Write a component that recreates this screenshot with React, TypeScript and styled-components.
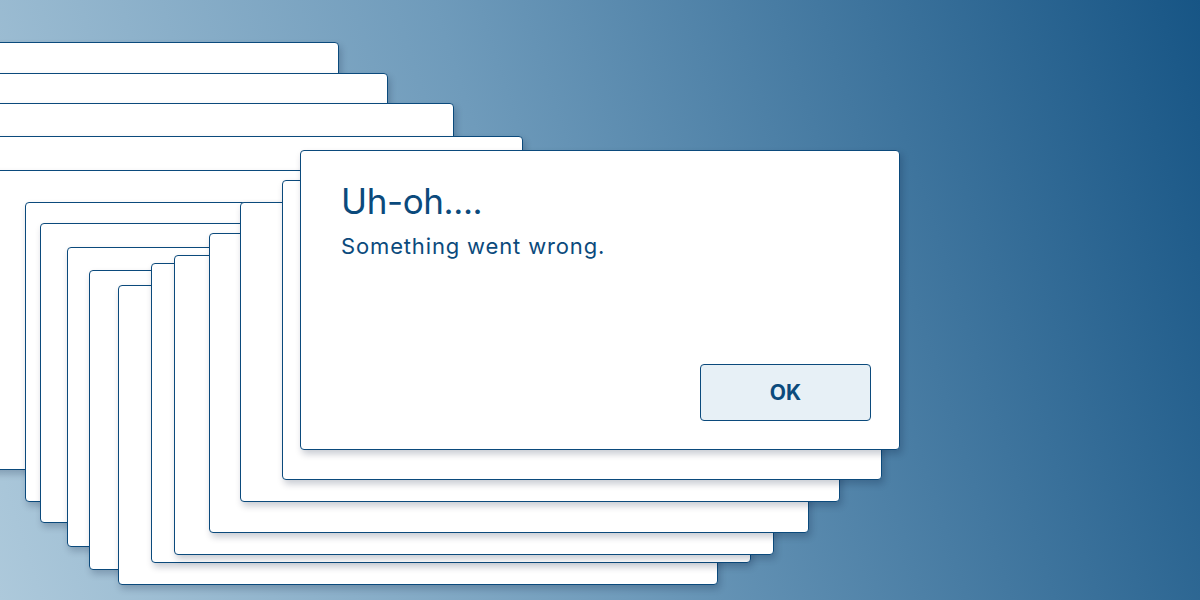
import React from "react";
import styled, { createGlobalStyle } from "styled-components";

const Global = createGlobalStyle`
  html, body { margin: 0; padding: 0; }
  body { font-family: Inter, "Noto Sans", sans-serif; }
`;

const INK = "#0b4a7c";

const Desktop = styled.div`
  position: relative;
  width: 1200px;
  height: 600px;
  overflow: hidden;
  background: linear-gradient(72deg, #adc9db 0%, #6f9bbb 45%, #175585 100%);
`;

const Window = styled.div<{ $x: number; $y: number }>`
  position: absolute;
  left: ${(p) => p.$x}px;
  top: ${(p) => p.$y}px;
  width: 600px;
  height: 300px;
  box-sizing: border-box;
  background: #ffffff;
  border: 1.5px solid ${INK};
  border-radius: 4px;
  box-shadow: 2px 4px 7px rgba(0, 20, 50, 0.22);
`;

const Dialog = styled(Window)`
  display: flex;
  flex-direction: column;
  padding: 28px 28px 28px 40px;
`;

const Title = styled.h1`
  margin: 0;
  font-family: Inter, "Noto Sans", sans-serif;
  font-weight: 400;
  font-size: 35px;
  letter-spacing: -0.4px;
  line-height: 44px;
  color: ${INK};
`;

const Message = styled.p`
  margin: 9px 0 0;
  font-family: Inter, "Noto Sans", sans-serif;
  font-weight: 400;
  font-size: 22px;
  letter-spacing: 0.85px;
  line-height: 28px;
  color: ${INK};
`;

const Footer = styled.div`
  margin-top: auto;
  display: flex;
  justify-content: flex-end;
`;

const Button = styled.button`
  width: 171px;
  height: 57px;
  box-sizing: border-box;
  background: #e7f0f6;
  border: 1px solid ${INK};
  border-radius: 4px;
  font-family: Inter, "Noto Sans", sans-serif;
  font-weight: 700;
  font-size: 21px;
  color: ${INK};
  cursor: pointer;
`;

const stack: { x: number; y: number }[] = [
  { x: -261, y: 42 },
  { x: -212, y: 73 },
  { x: -146, y: 103 },
  { x: -77, y: 136 },
  { x: -260, y: 170 },
  { x: 25, y: 202 },
  { x: 40, y: 223 },
  { x: 67, y: 247 },
  { x: 89, y: 270 },
  { x: 118, y: 285 },
  { x: 151, y: 263 },
  { x: 174, y: 255 },
  { x: 209, y: 233 },
  { x: 240, y: 202 },
  { x: 282, y: 180 },
];

export default function App() {
  return (
    <>
      <Global />
      <Desktop>
        {stack.map((w, i) => (
          <Window key={i} $x={w.x} $y={w.y} />
        ))}
        <Dialog $x={300} $y={150} role="alertdialog">
          <Title>Uh-oh....</Title>
          <Message>Something went wrong.</Message>
          <Footer>
            <Button>OK</Button>
          </Footer>
        </Dialog>
      </Desktop>
    </>
  );
}
